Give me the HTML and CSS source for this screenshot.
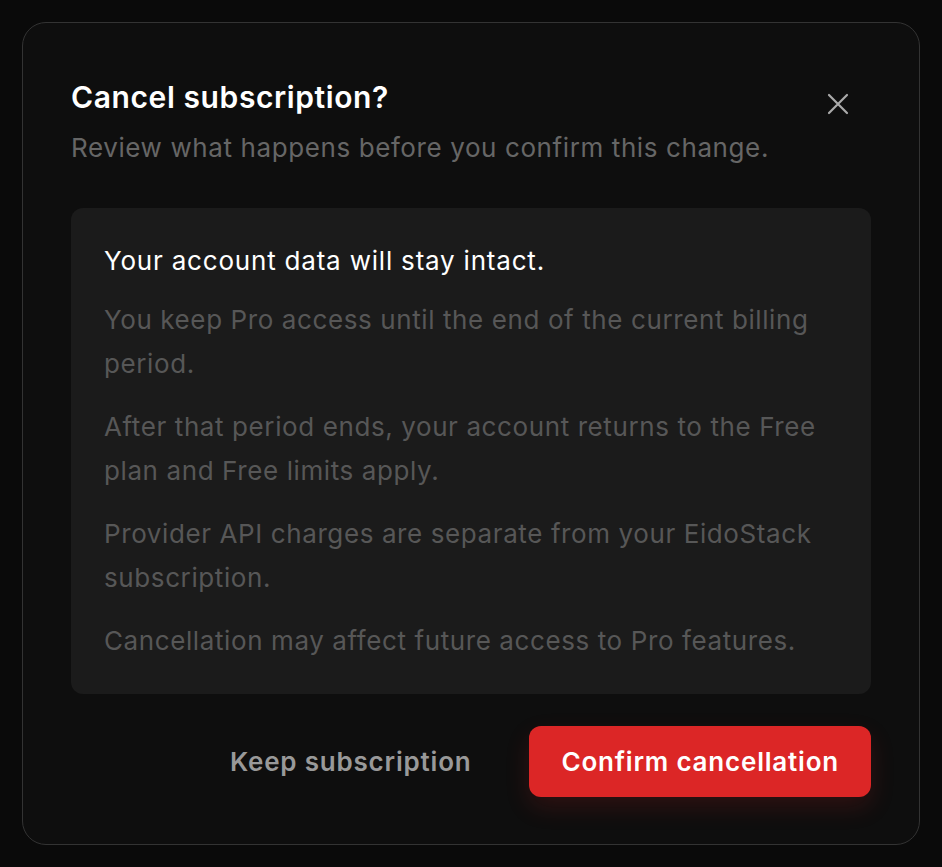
FILE: index.html
```html
<!DOCTYPE html>
<html lang="en">
<head>
    <meta charset="UTF-8">
    <meta name="viewport" content="width=device-width, initial-scale=1.0">
    <title>Cancel subscription</title>
    <link rel="stylesheet" href="styles.css">
</head>
<body>
    <div class="modal">
        <!-- header -->
        <div class="modal-header">
            <div>
                <h2 class="modal-title">Cancel subscription?</h2>
                <p class="modal-subtitle">Review what happens before you confirm this change.</p>
            </div>
            <button class="close-btn" aria-label="Close">
                <svg width="22" height="22" viewBox="0 0 22 22" fill="none" stroke="currentColor" stroke-width="2.2" stroke-linecap="round">
                    <path d="M2 2L20 20M20 2L2 20"/>
                </svg>
            </button>
        </div>

        <!-- info box -->
        <div class="info-box">
            <p class="info-lead">Your account data will stay intact.</p>
            <p class="info-item">You keep Pro access until the end of the current billing period.</p>
            <p class="info-item">After that period ends, your account returns to the Free plan and Free limits apply.</p>
            <p class="info-item">Provider API charges are separate from your EidoStack subscription.</p>
            <p class="info-item">Cancellation may affect future access to Pro features.</p>
        </div>

        <!-- actions -->
        <div class="actions">
            <button class="btn btn-ghost">Keep subscription</button>
            <button class="btn btn-danger">Confirm cancellation</button>
        </div>
    </div>
</body>
</html>
```

FILE: styles.css
```css
/* base */
body {
    font-family: Inter, "Noto Sans", sans-serif;
    background-color: #0a0a0a;
    margin: 0;
    padding: 22px;
    height: 100vh;
    box-sizing: border-box;
    letter-spacing: 0.8px;
}

/* dialog frame */
.modal {
    background-color: #0e0e0e;
    border: 1px solid #333;
    border-radius: 24px;
    padding: 56px 48px 48px;
    height: 100%;
    box-sizing: border-box;
}

.modal-header {
    display: flex;
    justify-content: space-between;
    align-items: flex-start;
}

.modal-title {
    color: #fff;
    font-size: 30px;
    font-weight: 600;
    line-height: 36px;
    letter-spacing: 0.6px;
    margin: 0;
}

.modal-subtitle {
    color: #666;
    font-size: 26px;
    line-height: 36px;
    letter-spacing: 0.6px;
    margin: 15px 0 0;
}

.close-btn {
    background: none;
    border: none;
    color: #aaa;
    padding: 0;
    margin: 14px 22px 0 0;
    cursor: pointer;
    display: flex;
}

/* info box */
.info-box {
    background-color: #1b1b1b;
    border-radius: 12px;
    margin-top: 42px;
    padding: 31px 33px 31px;
}

.info-box p {
    margin: 0;
    font-size: 26px;
    line-height: 44px;
}

.info-lead {
    color: #fff;
    margin-bottom: 15px !important;
}

.info-item {
    color: #575757;
    letter-spacing: 0.6px;
}

.info-item + .info-item {
    margin-top: 19px !important;
}

/* buttons */
.actions {
    display: flex;
    justify-content: flex-end;
    align-items: center;
    gap: 26px;
    margin-top: 32px;
}

.btn {
    font-family: inherit;
    font-size: 26px;
    font-weight: 600;
    letter-spacing: 0.8px;
    border: none;
    border-radius: 12px;
    height: 71px;
    padding: 0 32px;
    cursor: pointer;
}

.btn-ghost {
    background: none;
    color: #999;
}

.btn-danger {
    background-color: #dc2626;
    color: #fff;
    box-shadow: 0 10px 24px rgba(220, 38, 38, 0.16);
}
```
